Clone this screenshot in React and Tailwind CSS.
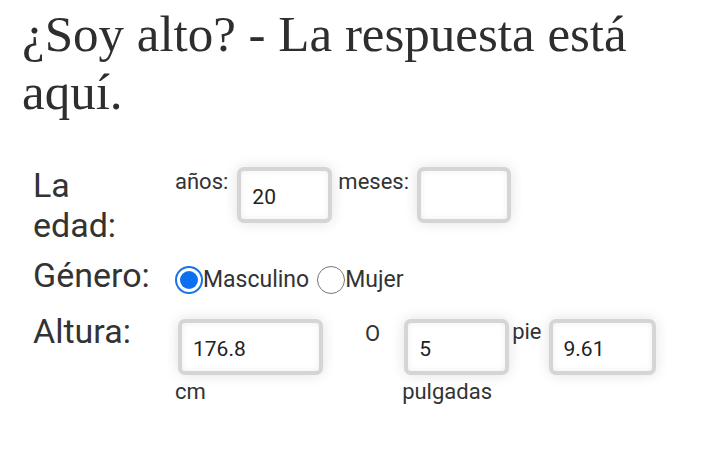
import React from "react";

const inputCls =
  "h-[56px] rounded-[7px] border-4 border-[#d5d5d5] bg-white px-[11px] pt-[4px] text-[21px] text-[#222] outline-none shadow-[0_0_14px_rgba(0,0,0,0.12),inset_0_0_6px_rgba(0,0,0,0.07)]";

function Radio({ checked, label }) {
  return (
    <label className="flex items-center">
      {checked ? (
        <span className="flex h-[28px] w-[28px] items-center justify-center rounded-full border-[2.5px] border-[#1a73e8] bg-white">
          <span className="h-[18px] w-[18px] rounded-full bg-[#0b6ff2]" />
        </span>
      ) : (
        <span className="h-[28px] w-[28px] rounded-full border-[1.5px] border-[#777] bg-white" />
      )}
      <span className="text-[23px] leading-[26px] text-[#333]">{label}</span>
    </label>
  );
}

export default function App() {
  return (
    <div className="min-h-[469px] w-[720px] bg-white font-['Roboto',sans-serif] text-[#333]">
      <h1 className="pl-[22px] pr-[40px] pt-[5px] font-['Liberation_Serif',serif] text-[51px] font-normal leading-[58px] text-[#2e2e2e]">
        ¿Soy alto? - La respuesta está aquí.
      </h1>

      <div className="mt-[44px] grid grid-cols-[142px_1fr] pl-[33px]">
        {/* edad */}
        <div className="w-[118px] text-[34px] leading-[40px]">La edad:</div>
        <div className="flex items-start pt-[2px]">
          <span className="mt-[2px] mr-[9px] text-[22px] leading-[26px]">años:</span>
          <input readOnly defaultValue="20" className={inputCls + " w-[95px]"} />
          <span className="mt-[2px] ml-[6px] mr-[8px] text-[22px] leading-[26px]">meses:</span>
          <input readOnly defaultValue="" className={inputCls + " w-[94px]"} />
        </div>

        {/* genero */}
        <div className="mt-[10px] text-[34px] leading-[40px]">Género:</div>
        <div className="mt-[10px] flex items-center gap-[8px] pt-[9px]">
          <Radio checked label="Masculino" />
          <Radio label="Mujer" />
        </div>

        {/* altura */}
        <div className="mt-[16px] text-[34px] leading-[40px]">Altura:</div>
        <div className="mt-[16px] flex items-start pt-[8px]">
          <div className="flex flex-col">
            <input readOnly defaultValue="176.8" className={inputCls + " ml-[3px] w-[145px]"} />
            <span className="mt-[4px] text-[22px] leading-[26px]">cm</span>
          </div>
          <span className="ml-[42px] mt-[2px] text-[22px] leading-[26px]">O</span>
          <div className="ml-[22px] flex flex-col">
            <input readOnly defaultValue="5" className={inputCls + " ml-[2px] w-[105px]"} />
            <span className="mt-[4px] text-[22px] leading-[26px]">pulgadas</span>
          </div>
          <span className="ml-[3px] text-[22px] leading-[26px]">pie</span>
          <input readOnly defaultValue="9.61" className={inputCls + " ml-[7px] w-[107px]"} />
        </div>
      </div>
    </div>
  );
}
